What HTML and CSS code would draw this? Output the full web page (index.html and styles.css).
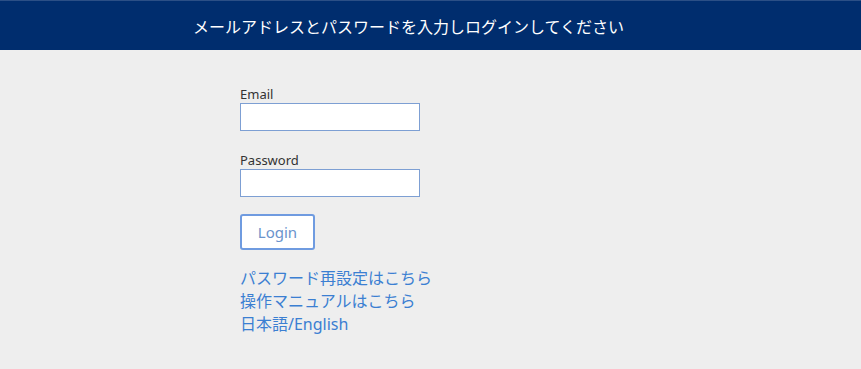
FILE: index.html
```html
<!DOCTYPE html>
<html lang="ja">
<head>
    <meta charset="UTF-8">
    <title>ログイン</title>
    <link rel="stylesheet" href="styles.css">
</head>
<body>
<div class="title-layout">
    <span>メールアドレスとパスワードを入力しログインしてください</span>
</div>
<form class="login-form" action="#">
    <div class="form-item">
        <label for="email">Email</label>
        <input type="text" id="email" name="email">
    </div>
    <div class="form-item">
        <label for="password">Password</label>
        <input type="password" id="password" name="password">
    </div>
    <div class="btn-layout">
        <button type="button" class="btn-login">Login</button>
    </div>
    <div class="link-list">
        <a href="#">パスワード再設定はこちら</a>
        <a href="#">操作マニュアルはこちら</a>
        <a href="#">日本語/English</a>
    </div>
</form>
</body>
</html>
```

FILE: styles.css
```css
body{
    margin: 0;
    padding: 0;
    background-color: #eeeeee;
    font-family: "Noto Sans", "Noto Sans CJK JP", sans-serif;
    color: #333;
}
.title-layout{
    display: flex;
    align-items: center;
    height: 49px;
    border-top: 1px solid #2b4f86;
    background-color: #002d6e;
    color: #fff;
    font-size: 16px;
    padding-left: 193px;
}
.login-form{
    display: flex;
    flex-direction: column;
    padding: 35px 0 0 240px;
}
.form-item{
    display: flex;
    flex-direction: column;
    margin-bottom: 20px;
}
.form-item label{
    font-size: 13px;
    line-height: 18px;
    color: #333;
}
.form-item input{
    box-sizing: border-box;
    width: 180px;
    height: 28px;
    margin: 0;
    border: 1px solid #7d9fd3;
    background-color: #fff;
    outline: none;
}
.btn-layout{
    margin-top: -3px;
}
.btn-login{
    box-sizing: border-box;
    width: 75px;
    height: 36px;
    background-color: #fff;
    border: 2px solid #6f9be0;
    border-radius: 3px;
    color: #6a93cc;
    font-family: inherit;
    font-size: 15px;
    cursor: pointer;
}
.link-list{
    display: flex;
    flex-direction: column;
    align-items: flex-start;
    margin-top: 17px;
}
.link-list a{
    color: #3b7fd2;
    font-size: 16px;
    line-height: 23px;
    text-decoration: none;
}
```
